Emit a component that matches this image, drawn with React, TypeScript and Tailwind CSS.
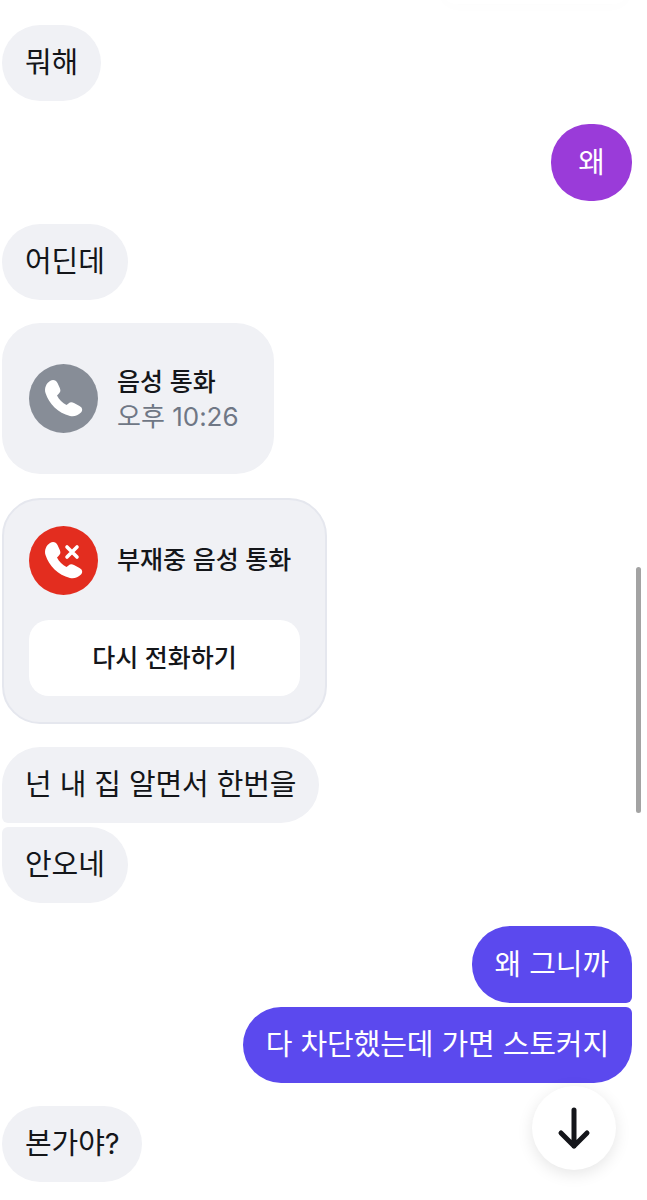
import React from 'react';

const PHONE_PATH =
  'M21 17C24 15 27 16 28.5 19L31 24.5C32 27 31 28.5 29.5 30L28 31.5C30 35.5 33.5 39 37.5 41L39.5 39.5C41 38 43 38 45 39L50.5 42C53.5 43.5 54 46.5 52 48.5C49 51.5 45 53 41 52C29 49 20 40 16.5 29C15 24 17.5 19 21 17Z';

const CallIcon = ({ missed }: { missed?: boolean }) => (
  <svg width="69" height="69" viewBox="0 0 69 69" className="shrink-0">
    <circle cx="34.5" cy="34.5" r="34.5" fill={missed ? '#e32d1f' : '#878d97'} />
    <path d={PHONE_PATH} fill="#fff" />
    {missed && (
      <path d="M38 21L48 31M48 21L38 31" stroke="#fff" strokeWidth="3.6" strokeLinecap="round" />
    )}
  </svg>
);

const Bubble = ({ className, children }: { className: string; children: React.ReactNode }) => (
  <div className={`h-[76px] flex items-center px-[23px] text-[29px] tracking-[-0.1px] ${className}`}>{children}</div>
);

const incoming = 'self-start bg-[#f0f1f5] text-[#14161a]';
const outgoing = 'self-end bg-[#5b49ee] text-white';

export default function App() {
  return (
    <div className="relative h-[1200px] w-[647px] overflow-hidden bg-white font-['Inter','Noto_Sans_CJK_KR',sans-serif]">
      <div className="absolute left-[440px] top-[-30px] h-[34px] w-[190px] rounded-[20px] shadow-[0_4px_14px_rgba(0,0,0,0.012)]" />

      <div className="flex flex-col pl-[2px] pr-[15px] pt-[25px]">
        <Bubble className={`${incoming} rounded-[38px]`}>뭐해</Bubble>
        <Bubble className="mt-[23px] h-[77px] w-[81px] justify-center self-end rounded-[38px] bg-[#9a3bd9] text-white">왜</Bubble>
        <Bubble className={`${incoming} mt-[23px] rounded-[38px]`}>어딘데</Bubble>

        <div className="mt-[23px] flex h-[151px] w-[272px] items-center gap-[19px] self-start rounded-[38px] bg-[#f0f1f5] pl-[27px]">
          <CallIcon />
          <div className="flex flex-col">
            <span className="text-[25px] leading-[36px] font-medium text-[#14161a]">음성 통화</span>
            <span className="text-[26px] leading-[34px] text-[#6f7785]">오후 10:26</span>
          </div>
        </div>

        <div className="mt-[24px] flex h-[226px] w-[325px] flex-col self-start rounded-[38px] border-2 border-[#e5e7ee] bg-[#f0f1f5] px-[25px] pt-[26px]">
          <div className="flex items-center gap-[19px]">
            <CallIcon missed />
            <span className="text-[25px] font-medium text-[#14161a]">부재중 음성 통화</span>
          </div>
          <div className="mt-[25px] flex h-[76px] items-center justify-center rounded-[20px] bg-white pt-[2px] text-[25px] font-medium text-[#14161a]">
            다시 전화하기
          </div>
        </div>

        <Bubble className={`${incoming} mt-[23px] rounded-[38px] rounded-bl-[6px]`}>넌 내 집 알면서 한번을</Bubble>
        <Bubble className={`${incoming} mt-[4px] rounded-[38px] rounded-tl-[6px]`}>안오네</Bubble>

        <Bubble className={`${outgoing} mt-[23px] h-[77px] rounded-[38px] rounded-br-[6px]`}>왜 그니까</Bubble>
        <Bubble className={`${outgoing} mt-[4px] rounded-[38px] rounded-tr-[6px]`}>다 차단했는데 가면 스토커지</Bubble>

        <Bubble className={`${incoming} mt-[23px] rounded-[38px]`}>본가야?</Bubble>
      </div>

      <div className="absolute left-[636px] top-[567px] h-[246px] w-[5px] rounded-full bg-[#a3a3a3]" />

      <button className="absolute left-[532px] top-[1086px] flex h-[84px] w-[84px] items-center justify-center rounded-full bg-white shadow-[0_4px_16px_rgba(0,0,0,0.1)]">
        <svg width="36" height="44" viewBox="0 0 36 44" fill="none" stroke="#14151a" strokeWidth="5" strokeLinecap="round" strokeLinejoin="round">
          <path d="M18 4V40M5 27L18 40L31 27" />
        </svg>
      </button>
    </div>
  );
}
